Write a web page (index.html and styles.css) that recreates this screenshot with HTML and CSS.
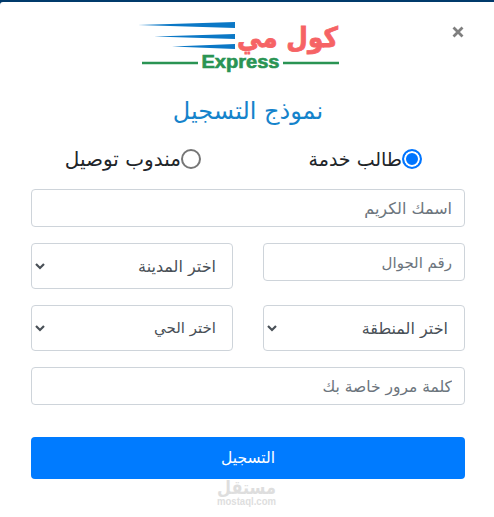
FILE: index.html
```html
<!DOCTYPE html>
<html lang="ar" dir="rtl">
<head>
    <meta charset="UTF-8">
    <meta name="viewport" content="width=device-width, initial-scale=1.0">
    <title>نموذج التسجيل</title>
    <link rel="stylesheet" href="styles.css">
</head>
<body>
    <div class="modal">
        <header>
            <button type="button" class="close" aria-label="إغلاق">
                <svg width="12" height="12" viewBox="0 0 12 12"><path d="M1.500 1.500l9 9M10.500 1.500l-9 9"/></svg>
            </button>
            <svg class="logo" width="204" height="54" viewBox="-4 0 204 54" direction="rtl">
                <g fill="#0b78c6">
                    <path d="M-3 3L94 0V6z"/>
                    <path d="M13 14.500L94 12V17z"/>
                    <path d="M31 24.500L94 22V27z"/>
                </g>
                <text class="logo-name" x="197" y="24.500" textLength="101" lengthAdjust="spacingAndGlyphs">كول مي</text>
                <path d="M1 41h56M142 41h56" stroke="#2a9453" stroke-width="2.300"/>
                <text class="logo-express" direction="ltr" x="60.500" y="45.500" textLength="78" lengthAdjust="spacingAndGlyphs">Express</text>
            </svg>
        </header>
        <form>
            <h2>نموذج التسجيل</h2>
            <div class="row types">
                <label><input type="radio" name="type" checked><span>طالب خدمة</span></label>
                <label class="courier"><input type="radio" name="type"><span>مندوب توصيل</span></label>
            </div>
            <input class="field" type="text" placeholder="اسمك الكريم">
            <div class="row">
                <input class="field phone" type="text" placeholder="رقم الجوال">
                <div class="select">
                    <select><option>اختر المدينة</option></select>
                    <svg width="10" height="7" viewBox="0 0 10 7"><path d="M1 1l4 4 4-4"/></svg>
                </div>
            </div>
            <div class="row">
                <div class="select">
                    <select><option>اختر المنطقة</option></select>
                    <svg width="10" height="7" viewBox="0 0 10 7"><path d="M1 1l4 4 4-4"/></svg>
                </div>
                <div class="select">
                    <select class="district"><option>اختر الحي</option></select>
                    <svg width="10" height="7" viewBox="0 0 10 7"><path d="M1 1l4 4 4-4"/></svg>
                </div>
            </div>
            <input class="field password" type="text" placeholder="كلمة مرور خاصة بك">
            <button type="submit" class="submit">التسجيل</button>
        </form>
        <svg class="watermark" width="62" height="29" viewBox="0 0 62 29" direction="rtl">
            <text class="mark-name" x="61" y="15" textLength="59" lengthAdjust="spacingAndGlyphs">مستقل</text>
            <text class="mark-site" direction="ltr" x="2" y="26" textLength="59" lengthAdjust="spacingAndGlyphs">mostaql.com</text>
        </svg>
    </div>
</body>
</html>
```
FILE: styles.css
```css
* {
    box-sizing: border-box;
}
body {
    margin: 0;
    padding-top: 2px;
    height: 517px;
    overflow: hidden;
    background-color: #003a6b;
    font-family: "DejaVu Sans", sans-serif;
    color: #212529;
}
.modal {
    height: 515px;
    padding: 20px 29px 0 31px;
    background-color: #fff;
    border-top-left-radius: 3px;
}
header {
    display: grid;
    grid-template-columns: 14px 1fr;
    height: 54px;
}
.close {
    width: 12px;
    height: 12px;
    margin-top: 4px;
    margin-right: 1px;
    padding: 0;
    border: 0;
    background: none;
}
.close svg {
    display: block;
    fill: none;
    stroke: #7f7f7f;
    stroke-width: 2.8;
}
.logo {
    display: block;
    margin-right: 110px;
    overflow: visible;
}
.logo-name {
    font-size: 28px;
    font-weight: bold;
    fill: #f66365;
    stroke: #f66365;
    stroke-width: 0.8px;
}
.logo-express {
    font: bold 17.5px "Liberation Sans", sans-serif;
    fill: #2a9453;
    stroke: #2a9453;
    stroke-width: 0.6px;
}
form {
    width: 434px;
}
h2 {
    height: 40px;
    margin: 15px 0 12px;
    font-size: 24px;
    font-weight: normal;
    line-height: 40px;
    text-align: center;
    color: #1583cb;
}
.row {
    display: grid;
    grid-template-columns: 1fr 1fr;
    column-gap: 30px;
    align-items: start;
    margin-bottom: 16px;
}
.types {
    height: 32px;
    margin-bottom: 14px;
    padding-right: 43px;
    grid-template-columns: 221px 1fr;
    column-gap: 0;
}
label {
    display: flex;
    align-items: center;
    height: 32px;
    font-size: 19px;
    white-space: nowrap;
}
.courier {
    font-size: 20px;
}
input[type="radio"] {
    appearance: none;
    flex: none;
    width: 20px;
    height: 20px;
    margin: 0;
    border: 2px solid #767676;
    border-radius: 50%;
}
input[type="radio"]:checked {
    border-color: #0075ff;
    background-color: #0075ff;
    box-shadow: inset 0 0 0 2px #fff;
}
.field,
select {
    display: block;
    width: 100%;
    height: 38px;
    margin: 0;
    padding: 1px 12px 0;
    border: 1px solid #ced4da;
    border-radius: 4px;
    background-color: #fff;
    font-family: inherit;
    font-size: 16px;
    color: #495057;
}
.field {
    margin-bottom: 16px;
}
.row .field {
    margin-bottom: 0;
}
.field::placeholder {
    color: #6c757d;
    opacity: 1;
}
.phone,
.district {
    font-size: 15px;
}
.password {
    font-size: 15.5px;
}
.select {
    position: relative;
}
select {
    height: 46px;
    padding: 0 16px;
    appearance: none;
}
.select svg {
    position: absolute;
    left: 4px;
    top: 20px;
    fill: none;
    stroke: #495057;
    stroke-width: 2.2;
}
.submit {
    display: block;
    width: 100%;
    height: 42px;
    margin-top: 32px;
    border: 0;
    border-radius: 4px;
    background-color: #007bff;
    color: #fff;
    font-family: inherit;
    font-size: 15.5px;
}
.watermark {
    display: block;
    margin-right: 188px;
    overflow: visible;
    fill: #dedede;
}
.mark-name {
    font-size: 19px;
    font-weight: bold;
}
.mark-site {
    font: bold 10px "Liberation Sans", sans-serif;
}
```
